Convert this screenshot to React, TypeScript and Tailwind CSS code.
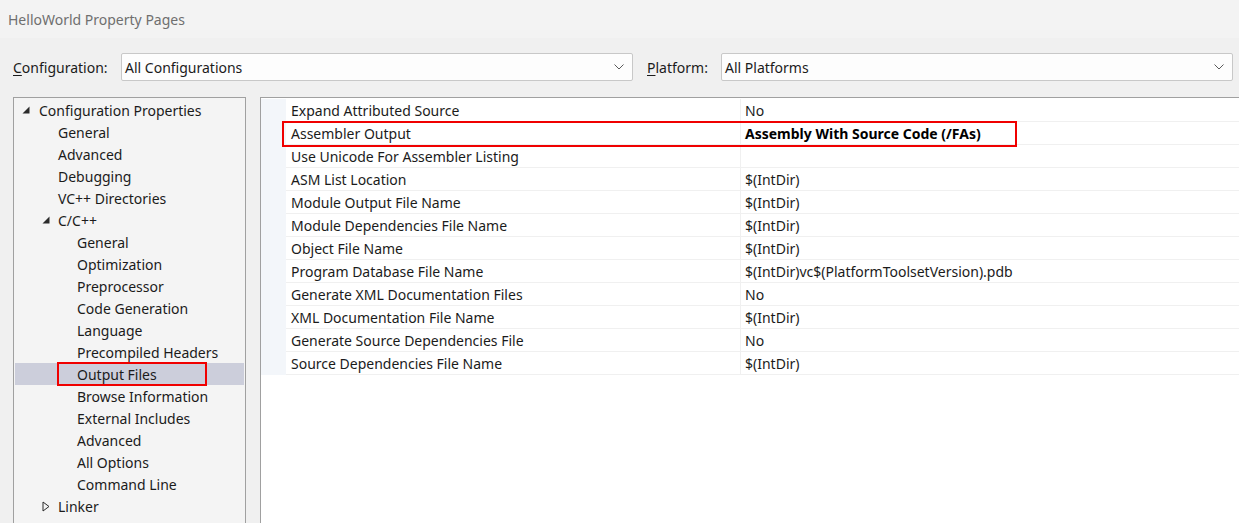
import React from "react";

const font = { fontFamily: '"Noto Sans", "Open Sans", sans-serif' };

type TreeItem = { label: string; level: number; toggle?: "open" | "closed"; selected?: boolean };

const tree: TreeItem[] = [
  { label: "Configuration Properties", level: 0, toggle: "open" },
  { label: "General", level: 1 },
  { label: "Advanced", level: 1 },
  { label: "Debugging", level: 1 },
  { label: "VC++ Directories", level: 1 },
  { label: "C/C++", level: 1, toggle: "open" },
  { label: "General", level: 2 },
  { label: "Optimization", level: 2 },
  { label: "Preprocessor", level: 2 },
  { label: "Code Generation", level: 2 },
  { label: "Language", level: 2 },
  { label: "Precompiled Headers", level: 2 },
  { label: "Output Files", level: 2, selected: true },
  { label: "Browse Information", level: 2 },
  { label: "External Includes", level: 2 },
  { label: "Advanced", level: 2 },
  { label: "All Options", level: 2 },
  { label: "Command Line", level: 2 },
  { label: "Linker", level: 1, toggle: "closed" },
  { label: "Manifest Tool", level: 1, toggle: "closed" },
];

const props: [string, string, boolean?][] = [
  ["Expand Attributed Source", "No"],
  ["Assembler Output", "Assembly With Source Code (/FAs)", true],
  ["Use Unicode For Assembler Listing", ""],
  ["ASM List Location", "$(IntDir)"],
  ["Module Output File Name", "$(IntDir)"],
  ["Module Dependencies File Name", "$(IntDir)"],
  ["Object File Name", "$(IntDir)"],
  ["Program Database File Name", "$(IntDir)vc$(PlatformToolsetVersion).pdb"],
  ["Generate XML Documentation Files", "No"],
  ["XML Documentation File Name", "$(IntDir)"],
  ["Generate Source Dependencies File", "No"],
  ["Source Dependencies File Name", "$(IntDir)"],
];

function Chevron() {
  return (
    <svg width="10" height="6" viewBox="0 0 10 6" className="shrink-0">
      <path d="M0.5 0.5 L5 5 L9.5 0.5" fill="none" stroke="#5a5a5a" strokeWidth="1" />
    </svg>
  );
}

function Toggle({ kind }: { kind: "open" | "closed" }) {
  if (kind === "open") {
    return (
      <svg width="8" height="8" viewBox="0 0 8 8">
        <polygon points="7.5,0.5 7.5,7.5 0.5,7.5" fill="#2b2b2b" />
      </svg>
    );
  }
  return (
    <svg width="8" height="11" viewBox="0 0 8 11">
      <polygon points="1,1 7,5.5 1,10" fill="none" stroke="#2b2b2b" strokeWidth="1" />
    </svg>
  );
}

const indent: Record<number, string> = { 0: "pl-[24px]", 1: "pl-[43px]", 2: "pl-[62px]" };

export default function App() {
  return (
    <div className="w-[1239px] h-[523px] overflow-hidden bg-[#f0f0f0] flex flex-col text-[#1b1b1b]" style={font}>
      <div className="h-[38px] shrink-0 bg-[#f3f3f3] flex items-center pl-[8px] text-[14px] text-[#6f6f6f]">
        HelloWorld Property Pages
      </div>
      <div className="flex items-center h-[28px] mt-[15px] pl-[13px] text-[14px]">
        <div className="w-[108px]">
          <span className="underline underline-offset-2">C</span>onfiguration:
        </div>
        <div className="w-[512px] h-[28px] bg-[#fdfdfd] border border-[#c8c8c8] rounded-[2px] flex items-center pl-[3px] pr-[8px] justify-between">
          <span>All Configurations</span>
          <Chevron />
        </div>
        <div className="w-[88px] pl-[14px]">
          <span className="underline underline-offset-2">P</span>latform:
        </div>
        <div className="w-[512px] h-[28px] bg-[#fdfdfd] border border-[#c8c8c8] rounded-[2px] flex items-center pl-[3px] pr-[8px] justify-between">
          <span>All Platforms</span>
          <Chevron />
        </div>
      </div>
      <div className="flex mt-[16px] pl-[13px] gap-[14px] flex-1 min-h-0">
        <div className="w-[233px] shrink-0 border border-[#a0a0a0] border-b-0 bg-[#f4f4f4] pt-[1px] px-[1px] text-[14px]">
          {tree.map((t, i) => (
            <div
              key={i}
              className={`relative h-[22px] flex items-center ${indent[t.level]} ${t.selected ? "bg-[#cccedb]" : ""}`}
            >
              {t.toggle ? (
                <span className="absolute top-0 h-[22px] flex items-center" style={{ left: t.level === 0 ? 7 : 27 }}>
                  <Toggle kind={t.toggle} />
                </span>
              ) : null}
              <span>{t.label}</span>
              {t.selected ? (
                <div className="absolute left-[42px] top-[-1px] w-[150px] h-[24px] border-2 border-[#f00000]" />
              ) : null}
            </div>
          ))}
        </div>
        <div className="flex-1 border-l border-t border-[#a0a0a0] bg-white relative text-[14px] pt-[1px]">
          {props.map(([name, value, bold], i) => (
            <div key={i} className="flex h-[23px]">
              <div className="w-[25px] bg-[#f3f6fa] shrink-0" />
              <div className="w-[455px] shrink-0 border-b border-r border-[#f0f0f0] pl-[5px] flex items-center">
                {name}
              </div>
              <div className={`flex-1 border-b border-[#f0f0f0] pl-[4px] flex items-center ${bold ? "font-bold text-black" : ""}`}>
                {value}
              </div>
            </div>
          ))}
          <div className="absolute left-[21px] top-[23px] w-[735px] h-[26px] border-2 border-[#f00000]" />
        </div>
      </div>
    </div>
  );
}
